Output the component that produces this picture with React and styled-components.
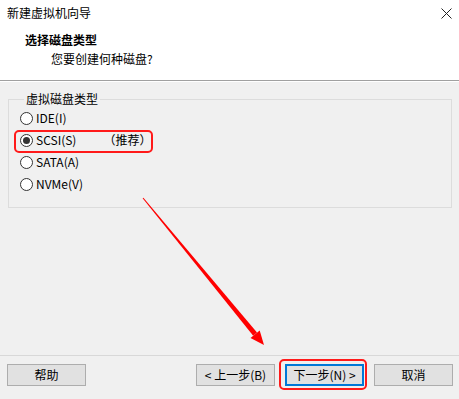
import React from 'react'
import styled, { createGlobalStyle } from 'styled-components'

const GlobalStyle = createGlobalStyle`
  html, body {
    margin: 0;
    padding: 0;
  }
  body {
    font-family: "Noto Sans CJK SC", "Noto Sans", sans-serif;
    font-size: 12px;
    color: #000;
    background: #f0f0f0;
  }
`

const Window = styled.div`
  position: relative;
  width: 459px;
  height: 399px;
  display: flex;
  flex-direction: column;
  background: #f0f0f0;
  overflow: hidden;
`

const Top = styled.div`
  height: 80px;
  background: #fff;
  border-bottom: 1px solid #a0a0a0;
  box-shadow: 0 1px 0 #fff;
  display: flex;
  flex-direction: column;
`

const TitleBar = styled.div`
  height: 26px;
  display: flex;
  align-items: center;
  justify-content: space-between;
  padding: 0 6px 0 7px;
  line-height: 16px;
`

const CloseButton = styled.div`
  width: 14px;
  height: 14px;
  display: flex;
  align-items: center;
  justify-content: center;
`

const Heading = styled.div`
  padding-left: 25px;
  margin-top: 6px;
  font-weight: 700;
  line-height: 16px;
`

const SubHeading = styled.div`
  padding-left: 51px;
  margin-top: 3px;
  line-height: 16px;
`

const Body = styled.div`
  flex: 1;
  padding: 10px 7px 0 8px;
`

const GroupBox = styled.fieldset`
  margin: 0;
  padding: 0 10px 12px 11px;
  border: 1px solid #dcdcdc;
  min-inline-size: 0;
`

const GroupLabel = styled.legend`
  padding: 0 2px;
  margin-left: 4px;
  line-height: 16px;
`

const Option = styled.label`
  position: relative;
  display: flex;
  align-items: center;
  height: 22px;
  gap: 3px;
  line-height: 16px;
`

const RadioCircle = styled.span`
  box-sizing: border-box;
  width: 13px;
  height: 13px;
  border-radius: 50%;
  border: 1px solid #333;
  background: #fff;
  display: flex;
  align-items: center;
  justify-content: center;

  &::after {
    content: '';
    width: 7px;
    height: 7px;
    border-radius: 50%;
    background: ${({ checked }) => (checked ? '#333' : 'transparent')};
  }
`

const Note = styled.span`
  margin-left: 24px;
`

const Highlight = styled.span`
  position: absolute;
  left: ${({ left }) => left}px;
  top: ${({ top }) => top}px;
  width: ${({ w }) => w}px;
  height: ${({ h }) => h}px;
  border: 2px solid #ff1a1a;
  border-radius: 5px;
  box-sizing: border-box;
  pointer-events: none;
`

const Footer = styled.div`
  height: 35px;
  border-top: 1px solid #d8d8d8;
  display: flex;
  align-items: flex-start;
  padding: 8px 6px 0 7px;
`

const ButtonGroup = styled.div`
  margin-left: auto;
  display: flex;
  gap: 10px;
`

const ButtonWrap = styled.div`
  position: relative;
`

const Button = styled.button`
  box-sizing: border-box;
  width: 79px;
  height: 22px;
  font-family: inherit;
  font-size: 12px;
  color: #000;
  background: #e1e1e1;
  border: 1px solid ${({ primary }) => (primary ? '#0078d7' : '#adadad')};
  box-shadow: ${({ primary }) => (primary ? 'inset 0 0 0 1px #0078d7' : 'none')};
  padding: 0;
  line-height: 16px;
`

const Overlay = styled.svg`
  position: absolute;
  left: 0;
  top: 0;
  pointer-events: none;
`

const options = [
  { label: 'IDE(I)' },
  { label: 'SCSI(S)', note: '（推荐）', checked: true },
  { label: 'SATA(A)' },
  { label: 'NVMe(V)' },
]

export default function App() {
  return (
    <Window>
      <GlobalStyle />
      <Top>
        <TitleBar>
          <span>新建虚拟机向导</span>
          <CloseButton>
            <svg width="11" height="11" viewBox="0 0 11 11">
              <path d="M0.5 0.5L10.5 10.5M10.5 0.5L0.5 10.5" stroke="#222" strokeWidth="1" />
            </svg>
          </CloseButton>
        </TitleBar>
        <Heading>选择磁盘类型</Heading>
        <SubHeading>您要创建何种磁盘?</SubHeading>
      </Top>
      <Body>
        <GroupBox>
          <GroupLabel>虚拟磁盘类型</GroupLabel>
          {options.map((o) => (
            <Option key={o.label}>
              <RadioCircle checked={o.checked} />
              <span>{o.label}</span>
              {o.note && <Note>{o.note}</Note>}
              {o.checked && <Highlight left={-6} top={1} w={139} h={23} />}
            </Option>
          ))}
        </GroupBox>
      </Body>
      <Footer>
        <Button>帮助</Button>
        <ButtonGroup>
          <Button>&lt; 上一步(B)</Button>
          <ButtonWrap>
            <Button primary>下一步(N) &gt;</Button>
            <Highlight left={-6} top={-5} w={88} h={31} />
          </ButtonWrap>
          <Button>取消</Button>
        </ButtonGroup>
      </Footer>
      <Overlay width="459" height="399" viewBox="0 0 459 399">
        <polygon
          points="142.6,198.3 143.4,197.7 257.0,332.6 253.2,335.8"
          fill="#ff0000"
        />
        <polygon points="250.5,338.0 259.7,330.4 264,345" fill="#ff0000" />
      </Overlay>
    </Window>
  )
}
